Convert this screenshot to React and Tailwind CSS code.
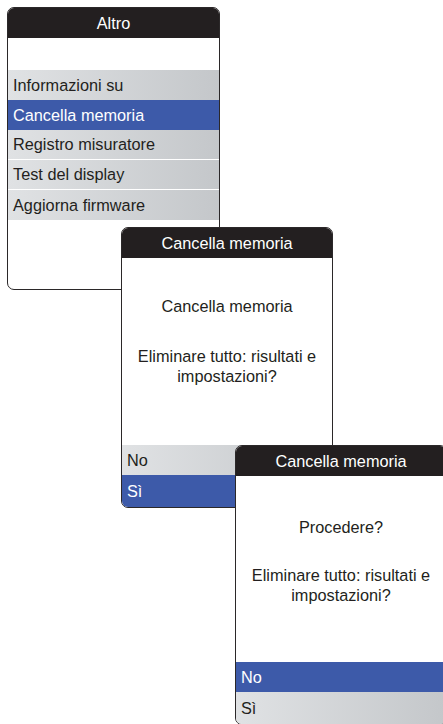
import React from "react";

const gray = "bg-linear-to-r from-[#e0e2e4] to-[#c4c7ca] text-[#231f20]";
const blue = "bg-[#3d5aa9] text-white";

const Row = ({ label, active, line }) => (
  <div
    className={`h-[30px] flex items-center pl-[5px] text-[16.3px] leading-none ${
      active ? blue : gray
    } ${line ? "border-b border-white" : ""}`}
  >
    {label}
  </div>
);

const Screen = ({ className, title, children }) => (
  <div
    className={`absolute flex flex-col bg-white border-[1.5px] border-[#2b2829] rounded-[7px] overflow-hidden ${className}`}
  >
    <div className="h-[30px] shrink-0 bg-[#231f20] text-white text-[16.3px] flex items-center justify-center">
      {title}
    </div>
    {children}
  </div>
);

export default function App() {
  return (
    <div
      className="relative w-[443px] h-[724px] overflow-hidden bg-white"
      style={{ fontFamily: '"Liberation Sans", Arial, sans-serif' }}
    >
      {/* Menu Altro */}
      <Screen className="left-[7px] top-[7px] w-[213px] h-[283px]" title="Altro">
        <div className="h-[32px] shrink-0" />
        <Row label="Informazioni su" />
        <Row label="Cancella memoria" active />
        <Row label="Registro misuratore" line />
        <Row label="Test del display" line />
        <Row label="Aggiorna firmware" />
      </Screen>

      {/* Conferma 1 */}
      <Screen className="left-[121px] top-[227px] w-[212px] h-[281px]" title="Cancella memoria">
        <div className="flex-1 flex flex-col items-center text-center text-[16.3px] leading-[20px] text-[#231f20] pt-[38px]">
          <p>Cancella memoria</p>
          <p className="mt-[30px]">
            Eliminare tutto: risultati e<br />impostazioni?
          </p>
        </div>
        <Row label="No" />
        <div className="h-[32px] flex items-center pl-[5px] text-[16.3px] bg-[#3d5aa9] text-white">Sì</div>
      </Screen>

      {/* Conferma 2 */}
      <Screen className="left-[235px] top-[445px] w-[212px] h-[280px]" title="Cancella memoria">
        <div className="flex-1 flex flex-col items-center text-center text-[16.3px] leading-[20px] text-[#231f20] pt-[41px]">
          <p>Procedere?</p>
          <p className="mt-[28px]">
            Eliminare tutto: risultati e<br />impostazioni?
          </p>
        </div>
        <Row label="No" active />
        <div className={`h-[32px] flex items-center pl-[5px] text-[16.3px] ${gray}`}>Sì</div>
      </Screen>
    </div>
  );
}
